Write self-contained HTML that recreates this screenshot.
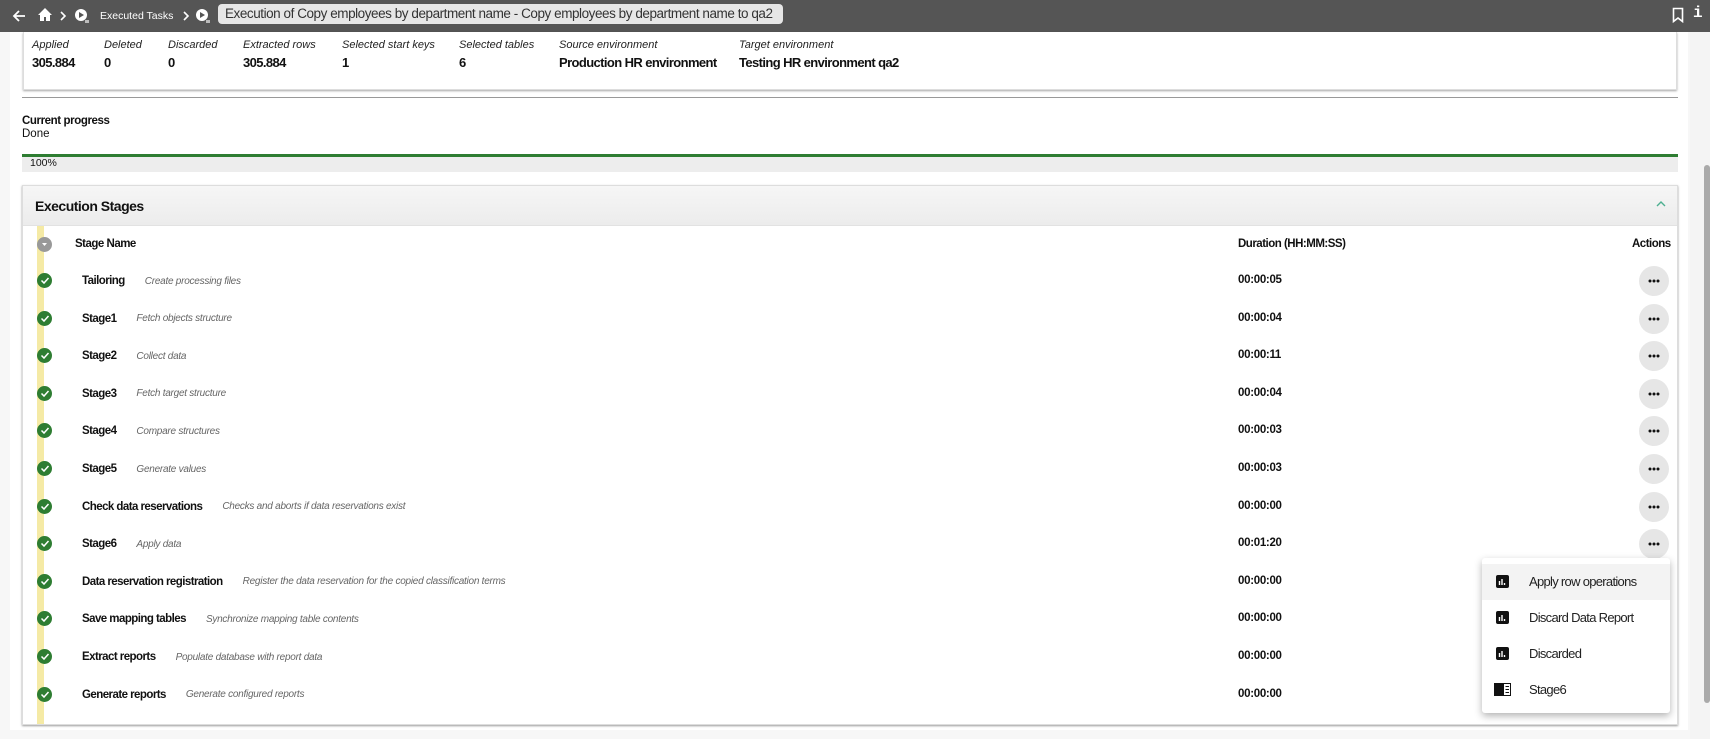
<!DOCTYPE html>
<html><head><meta charset="utf-8"><style>
*{box-sizing:border-box;margin:0;padding:0}
body{width:1710px;height:739px;overflow:hidden;background:#f7f7f7;font-family:"Liberation Sans",sans-serif;color:#111;position:relative}
.abs{position:absolute}
#bar{left:0;top:0;width:1710px;height:32px;background:#555}
#main{left:10px;top:32px;width:1678px;height:698px;background:#fff}
.lbl{font-size:11px;font-style:italic;color:#222;top:39px}
.val{font-size:13px;font-weight:bold;top:55px;letter-spacing:-0.6px}
.row{position:absolute;left:82px;height:20px;display:flex;align-items:center;gap:20px;font-size:11.5px}
.row b{font-weight:bold;letter-spacing:-0.55px}
.row i{font-size:10px;color:#666;letter-spacing:-0.25px}
.dur{position:absolute;left:1238px;font-size:11.5px;font-weight:bold;letter-spacing:-0.3px}
.chk{position:absolute;left:37px;width:15px;height:15px;border-radius:50%;background:#2e7d32}
.btn{position:absolute;left:1639px;width:30px;height:30px;border-radius:50%;background:#e6e6e6}
.btn svg{position:absolute;left:9px;top:13px}
.mi{position:absolute;left:0;width:188px;height:36px;font-size:13px;color:#222;letter-spacing:-0.7px}
.mi span{position:absolute;left:47px;top:10px}
.ico{position:absolute;left:14px;top:11px;width:13px;height:13px;background:#111;border-radius:2px}
</style></head><body>
<div id="bar" class="abs">
<svg class="abs" style="left:12px;top:9px" width="14" height="14" viewBox="0 0 14 14"><path d="M13 7H2M7 2L2 7l5 5" stroke="#fff" stroke-width="1.8" fill="none"/></svg>
<svg class="abs" style="left:37px;top:7px" width="16" height="16" viewBox="0 0 16 16"><path d="M8 1L1 8h2v6h4v-4h2v4h4V8h2z" fill="#fff"/></svg>
<svg class="abs" style="left:59px;top:11px" width="8" height="10" viewBox="0 0 8 10"><path d="M2 1l4 4-4 4" stroke="#fff" stroke-width="1.6" fill="none"/></svg>
<svg class="abs" style="left:74px;top:8px" width="16" height="16" viewBox="0 0 16 16"><circle cx="7" cy="7" r="6" fill="#fff"/><path d="M5 4l5 3-5 3z" fill="#555"/><rect x="11" y="12" width="4" height="3" fill="#bbb"/></svg>
<div class="abs" style="left:100px;top:10px;font-size:10.5px;color:#fff">Executed Tasks</div>
<svg class="abs" style="left:182px;top:11px" width="8" height="10" viewBox="0 0 8 10"><path d="M2 1l4 4-4 4" stroke="#fff" stroke-width="1.6" fill="none"/></svg>
<svg class="abs" style="left:195px;top:8px" width="16" height="16" viewBox="0 0 16 16"><circle cx="7" cy="7" r="6" fill="#fff"/><path d="M5 4l5 3-5 3z" fill="#555"/><rect x="11" y="12" width="4" height="3" fill="#bbb"/></svg>
<div class="abs" style="left:218px;top:4px;width:565px;height:20px;background:#e6e6e6;border-radius:4px;font-size:13.5px;color:#333;padding:2px 7px;white-space:nowrap;letter-spacing:-0.45px;overflow:hidden">Execution of Copy employees by department name - Copy employees by department name to qa2</div>
<svg class="abs" style="left:1672px;top:7px" width="12" height="16" viewBox="0 0 12 16"><path d="M1.5 1.5h9v13L6 11l-4.5 3.5z" stroke="#fff" stroke-width="1.6" fill="none"/></svg>
<div class="abs" style="left:1693px;top:4px;color:#fff;font-weight:bold;font-size:16px;font-family:'Liberation Mono',monospace">i</div>
</div>
<div id="main" class="abs"></div>
<div class="abs" style="left:1690px;top:32px;width:20px;height:707px;background:#f4f4f4"></div>
<div class="abs" style="left:1704px;top:165px;width:6px;height:538px;background:#aaa;border-radius:3px"></div>
<div class="abs" style="left:23px;top:32px;width:1654px;height:58px;background:#fff;border:1px solid #ddd;border-top:none;box-shadow:0 1px 2px rgba(0,0,0,.35)"></div>
<div class="abs lbl" style="left:32px">Applied</div><div class="abs val" style="left:32px">305.884</div>
<div class="abs lbl" style="left:104px">Deleted</div><div class="abs val" style="left:104px">0</div>
<div class="abs lbl" style="left:168px">Discarded</div><div class="abs val" style="left:168px">0</div>
<div class="abs lbl" style="left:243px">Extracted rows</div><div class="abs val" style="left:243px">305.884</div>
<div class="abs lbl" style="left:342px">Selected start keys</div><div class="abs val" style="left:342px">1</div>
<div class="abs lbl" style="left:459px">Selected tables</div><div class="abs val" style="left:459px">6</div>
<div class="abs lbl" style="left:559px">Source environment</div><div class="abs val" style="left:559px">Production HR environment</div>
<div class="abs lbl" style="left:739px">Target environment</div><div class="abs val" style="left:739px">Testing HR environment qa2</div>
<div class="abs" style="left:22px;top:97px;width:1656px;height:1px;background:#999"></div>
<div class="abs" style="left:22px;top:115px;font-size:11.5px;font-weight:bold;letter-spacing:-0.4px">Current progress</div>
<div class="abs" style="left:22px;top:128px;font-size:11.5px">Done</div>
<div class="abs" style="left:22px;top:154px;width:1656px;height:18px;background:#ededed;border-top:3px solid #2e7d32"></div>
<div class="abs" style="left:30px;top:157px;font-size:10.5px">100%</div>
<div class="abs" style="left:22px;top:185px;width:1656px;height:540px;background:#fff;border:1px solid #ddd;box-shadow:0 1px 2px rgba(0,0,0,.4)"></div>
<div class="abs" style="left:23px;top:186px;width:1654px;height:40px;background:linear-gradient(#f6f6f6,#ececec);border-bottom:1px solid #e2e2e2"></div>
<div class="abs" style="left:35px;top:198px;font-size:14px;font-weight:bold;color:#111;letter-spacing:-0.5px">Execution Stages</div>
<svg class="abs" style="left:1655px;top:200px" width="12" height="8" viewBox="0 0 12 8"><path d="M2 6l4-4 4 4" stroke="#4caf90" stroke-width="1.4" fill="none"/></svg>
<div class="abs" style="left:37px;top:226px;width:7px;height:498px;background:#f5eaa5"></div>
<div class="abs" style="left:37px;top:237px;width:15px;height:15px;border-radius:50%;background:#999"></div>
<svg class="abs" style="left:40px;top:241px" width="9" height="7"><path d="M2 2h5L4.5 5z" fill="#fff"/></svg>
<div class="abs" style="left:75px;top:238px;font-size:11.5px;font-weight:bold;letter-spacing:-0.5px">Stage Name</div>
<div class="abs" style="left:1238px;top:238px;font-size:11.5px;font-weight:bold;letter-spacing:-0.5px">Duration (HH:MM:SS)</div>
<div class="abs" style="left:1632px;top:238px;font-size:11.5px;font-weight:bold;letter-spacing:-0.5px">Actions</div>
<div id="rows"></div>
<script>
var d=[["Tailoring","Create processing files","00:00:05"],["Stage1","Fetch objects structure","00:00:04"],["Stage2","Collect data","00:00:11"],["Stage3","Fetch target structure","00:00:04"],["Stage4","Compare structures","00:00:03"],["Stage5","Generate values","00:00:03"],["Check data reservations","Checks and aborts if data reservations exist","00:00:00"],["Stage6","Apply data","00:01:20"],["Data reservation registration","Register the data reservation for the copied classification terms","00:00:00"],["Save mapping tables","Synchronize mapping table contents","00:00:00"],["Extract reports","Populate database with report data","00:00:00"],["Generate reports","Generate configured reports","00:00:00"]];
var h="";
d.forEach(function(r,i){var y=281+i*37.6;
h+='<div class="chk" style="top:'+(y-8)+'px"></div><svg class="abs" style="left:40px;top:'+(y-5)+'px" width="10" height="9"><path d="M1.5 4.5l2.5 2.5 4.5-5" stroke="#fff" stroke-width="1.5" fill="none"/></svg>';
h+='<div class="row" style="top:'+(y-10)+'px"><b>'+r[0]+'</b><i>'+r[1]+'</i></div>';
h+='<div class="dur" style="top:'+(y-7)+'px">'+r[2]+'</div>';
h+='<div class="btn" style="top:'+(y-15)+'px"><svg width="12" height="4"><circle cx="2" cy="2" r="1.5" fill="#111"/><circle cx="6" cy="2" r="1.5" fill="#111"/><circle cx="10" cy="2" r="1.5" fill="#111"/></svg></div>';});
document.getElementById("rows").innerHTML=h;
</script>
<div class="abs" style="left:1482px;top:558px;width:188px;height:155px;background:#fff;border-radius:3px;box-shadow:0 3px 8px rgba(0,0,0,.3)">
<div class="mi" style="top:6px;background:#f3f3f3"><svg class="ico" viewBox="0 0 13 13"><path d="M3.5 6v4M6 4v6M8.5 8v2" stroke="#fff" stroke-width="1.4"/></svg><span>Apply row operations</span></div>
<div class="mi" style="top:42px"><svg class="ico" viewBox="0 0 13 13"><path d="M3.5 6v4M6 4v6M8.5 8v2" stroke="#fff" stroke-width="1.4"/></svg><span>Discard Data Report</span></div>
<div class="mi" style="top:78px"><svg class="ico" viewBox="0 0 13 13"><path d="M3.5 6v4M6 4v6M8.5 8v2" stroke="#fff" stroke-width="1.4"/></svg><span>Discarded</span></div>
<div class="mi" style="top:114px"><svg class="abs" style="left:12px;top:11px" width="17" height="13" viewBox="0 0 17 13"><rect x="0.5" y="0.5" width="16" height="12" fill="#fff" stroke="#111"/><rect x="0" y="0" width="10" height="13" fill="#111"/><path d="M11.5 3.5h3.5M11.5 6.5h3.5M11.5 9.5h3.5" stroke="#111" stroke-width="1"/></svg><span>Stage6</span></div>
</div>
</body></html>
